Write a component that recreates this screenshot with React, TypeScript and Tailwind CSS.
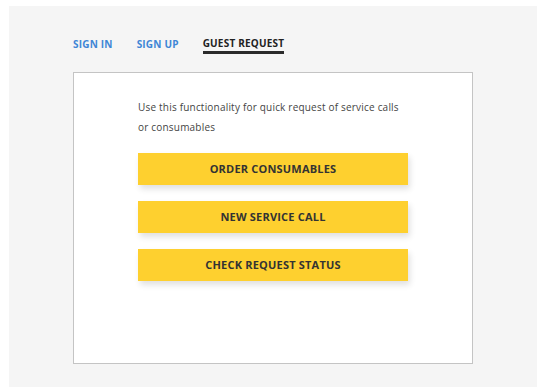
import * as React from 'react';

const ACTIONS = ['ORDER CONSUMABLES', 'NEW SERVICE CALL', 'CHECK REQUEST STATUS'];

export default function App() {
  return (
    <div className="w-[548px] h-[392px] bg-white pt-[6px] pl-[9px] font-['Open_Sans',sans-serif]">
      <div className="w-[528px] h-[381px] bg-[#f5f5f5] pl-[64px] pt-[29px]">
        {/* Tabs */}
        <nav className="flex items-start gap-[24px] h-[37px] text-[10px] font-bold tracking-[0.2px]">
          <span className="text-[#3f86d6] leading-[18px]">SIGN IN</span>
          <span className="text-[#3f86d6] leading-[18px]">SIGN UP</span>
          <span className="text-[#222] leading-[16px] border-b-[3px] border-[#2b2b2b]">GUEST REQUEST</span>
        </nav>

        {/* Card */}
        <div className="w-[400px] h-[292px] bg-white border border-[#c4c4c4] pl-[64px] pt-[24px]">
          <p className="text-[10px] leading-[20px] text-[#444] w-[264px] tracking-[0.2px]">
            Use this functionality for quick request of service calls or consumables
          </p>
          <div className="flex flex-col gap-[16px] mt-[16px]">
            {ACTIONS.map((a) => (
              <button
                key={a}
                className="w-[270px] h-[32px] bg-[#fed02f] text-[#333] text-[11px] font-bold tracking-[0.2px] shadow-[2px_4px_6px_rgba(0,0,0,0.12)]"
              >
                {a}
              </button>
            ))}
          </div>
        </div>
      </div>
    </div>
  );
}
